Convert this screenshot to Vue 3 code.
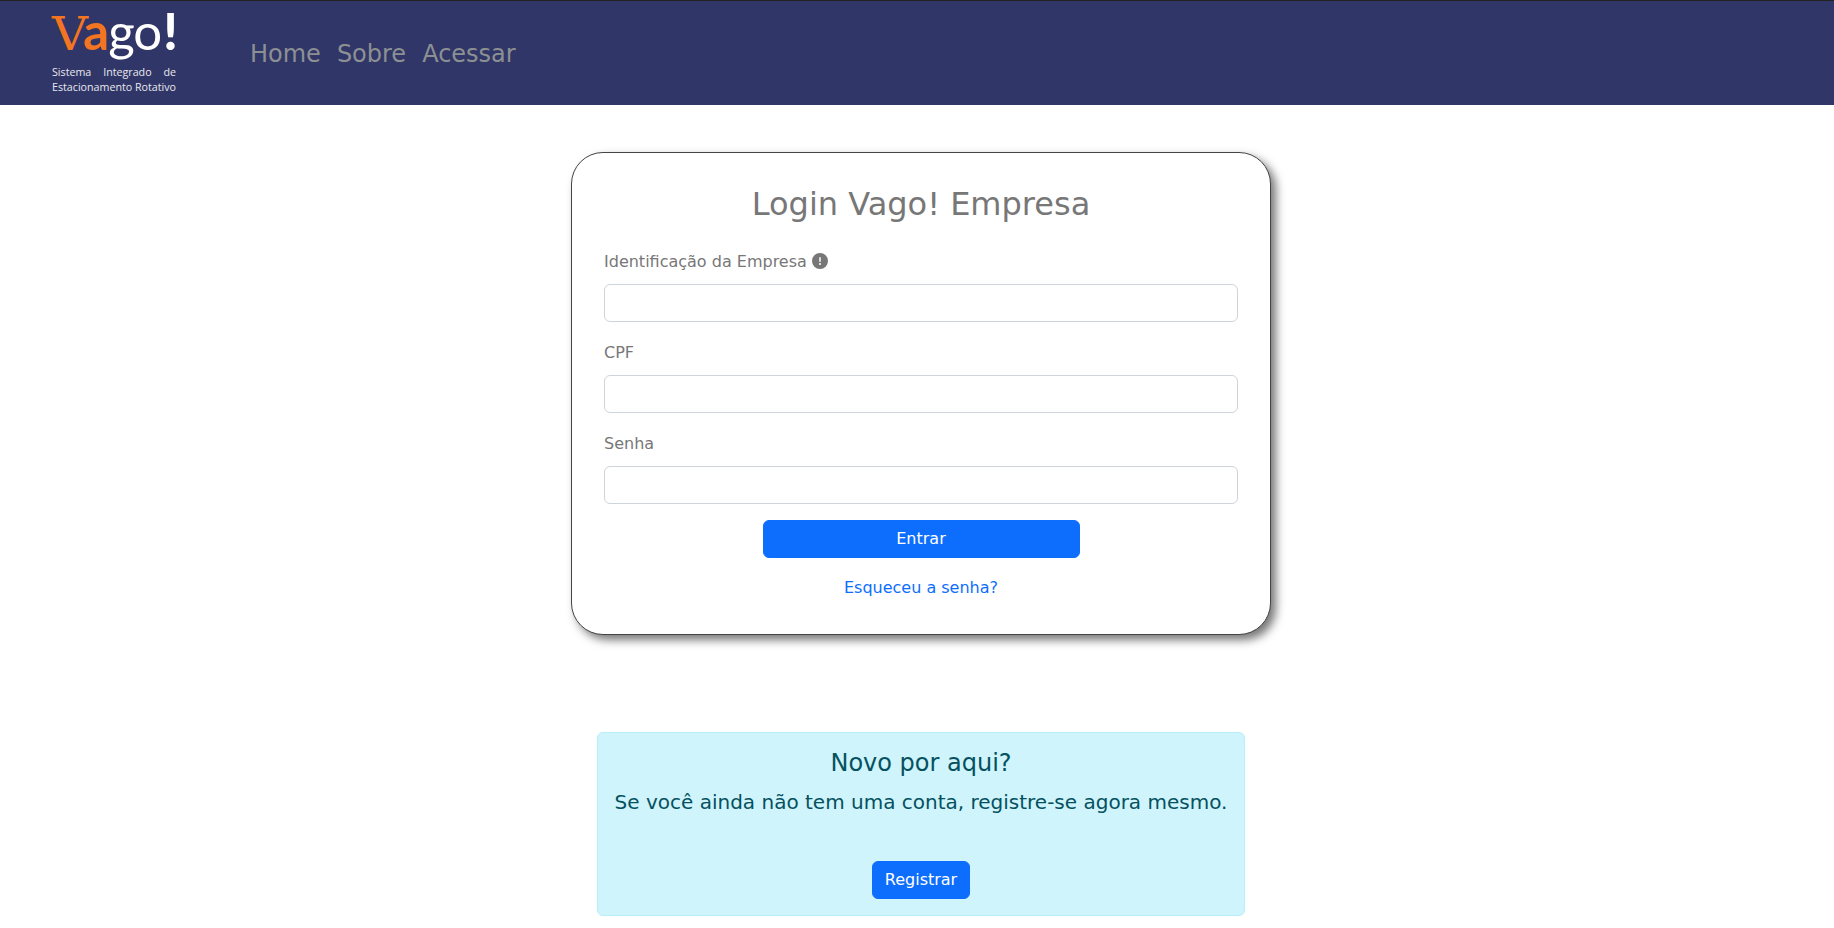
<script setup>
const navLinks = ['Home', 'Sobre', 'Acessar']
</script>

<template>
  <div class="page">
    <header class="topbar">
      <a class="logo" href="#">
        <div class="logo-word"><span class="logo-v">V</span><span class="logo-a">a</span><span class="logo-go">go</span><span class="logo-bang">!</span></div>
        <div class="logo-line justified">Sistema Integrado de</div>
        <div class="logo-line">Estacionamento Rotativo</div>
      </a>
      <nav class="nav">
        <a v-for="link in navLinks" :key="link" href="#">{{ link }}</a>
      </nav>
    </header>

    <main class="content">
      <form class="card" @submit.prevent>
        <h2 class="card-title">Login Vago! Empresa</h2>

        <div class="field">
          <label for="empresa">
            Identificação da Empresa
            <svg class="info" viewBox="0 0 512 512" width="16" height="16">
              <path fill="currentColor" d="M256 512A256 256 0 1 0 256 0a256 256 0 1 0 0 512zm0-384c13.300 0 24 10.700 24 24v112c0 13.300-10.700 24-24 24s-24-10.700-24-24V152c0-13.300 10.700-24 24-24zm-32 224a32 32 0 1 1 64 0 32 32 0 1 1-64 0z" />
            </svg>
          </label>
          <input id="empresa" type="text" />
        </div>

        <div class="field">
          <label for="cpf">CPF</label>
          <input id="cpf" type="text" />
        </div>

        <div class="field last">
          <label for="senha">Senha</label>
          <input id="senha" type="password" />
        </div>

        <button class="btn btn-wide" type="submit">Entrar</button>
        <a class="forgot" href="#">Esqueceu a senha?</a>
      </form>

      <section class="alert">
        <h4>Novo por aqui?</h4>
        <p>Se você ainda não tem uma conta, registre-se agora mesmo.</p>
        <button class="btn" type="button">Registrar</button>
      </section>
    </main>
  </div>
</template>

<style>
body {
  margin: 0;
  background: #fff;
}
</style>

<style scoped>
.page {
  font-family: "DejaVu Sans", sans-serif;
  font-size: 16px;
  line-height: 24px;
  color: #212529;
  height: 928px;
  overflow: hidden;
}

/* header */
.topbar {
  display: flex;
  align-items: center;
  box-sizing: border-box;
  height: 105px;
  padding-left: 52px;
  background: #303667;
  border-top: 1px solid #222;
}

.logo {
  display: block;
  width: 124px;
  margin-top: -3px;
  color: #fff;
  text-decoration: none;
}

.logo-word {
  font-family: Lato, sans-serif;
  font-size: 51px;
  line-height: 46px;
  letter-spacing: -1px;
  margin-bottom: 8px;
  white-space: nowrap;
}

.logo-v {
  display: inline-block;
  font-family: "DejaVu Serif", serif;
  font-size: 46px;
  letter-spacing: -2px;
  transform: scaleX(1.08);
  transform-origin: left;
  color: #f47521;
}

.logo-a {
  color: #f47521;
  font-weight: 700;
}

.logo-go {
  color: #fff;
}

.logo-bang {
  margin-left: 2px;
  color: #fff;
  font-weight: 900;
}

.logo-line {
  font-family: "Open Sans", sans-serif;
  font-size: 10.7px;
  line-height: 15px;
  white-space: nowrap;
  color: #e8e8ee;
}

.justified {
  white-space: normal;
  text-align: justify;
  text-align-last: justify;
}

.nav {
  display: flex;
  gap: 16px;
  margin: 2px 0 0 74px;
}

.nav a {
  font-size: 24px;
  line-height: 36px;
  color: #8d9093;
  text-decoration: none;
}

/* login */
.content {
  display: flex;
  flex-direction: column;
  align-items: center;
  padding-left: 8px;
}

.card {
  box-sizing: border-box;
  width: 700px;
  height: 483px;
  margin-top: 47px;
  padding: 32px;
  background: #fff;
  border: 1px solid #444;
  border-radius: 32px;
  box-shadow: 5px 5px 10px #777;
  color: #777;
  display: flex;
  flex-direction: column;
}

.card-title {
  margin: 0 0 27px;
  font-size: 32px;
  line-height: 38px;
  font-weight: 400;
  text-align: center;
}

.field {
  display: flex;
  flex-direction: column;
  margin-bottom: 19px;
}

.field.last {
  margin-bottom: 16px;
}

.field label {
  display: block;
  margin-bottom: 10px;
}

.info {
  vertical-align: -2px;
}

.field input {
  box-sizing: border-box;
  width: 100%;
  height: 38px;
  padding: 6px 12px;
  border: 1px solid #ced4da;
  border-radius: 6px;
  background: #fff;
  outline: none;
}

.btn {
  font: inherit;
  height: 38px;
  padding: 6px 12px;
  border: 1px solid #0d6efd;
  border-radius: 6px;
  background: #0d6efd;
  color: #fff;
}

.btn-wide {
  align-self: center;
  width: 317px;
}

.forgot {
  margin-top: 18px;
  text-align: center;
  color: #0d6efd;
  text-decoration: none;
}

/* alert */
.alert {
  box-sizing: border-box;
  width: 648px;
  height: 184px;
  margin-top: 97px;
  padding: 16px;
  background: #cff4fc;
  border: 1px solid #b6effb;
  border-radius: 6px;
  color: #055160;
  text-align: center;
}

.alert h4 {
  margin: 0 0 9px;
  font-size: 24px;
  line-height: 29px;
  font-weight: 400;
}

.alert p {
  margin: 0 0 44px;
  font-size: 20px;
  line-height: 30px;
}
</style>
